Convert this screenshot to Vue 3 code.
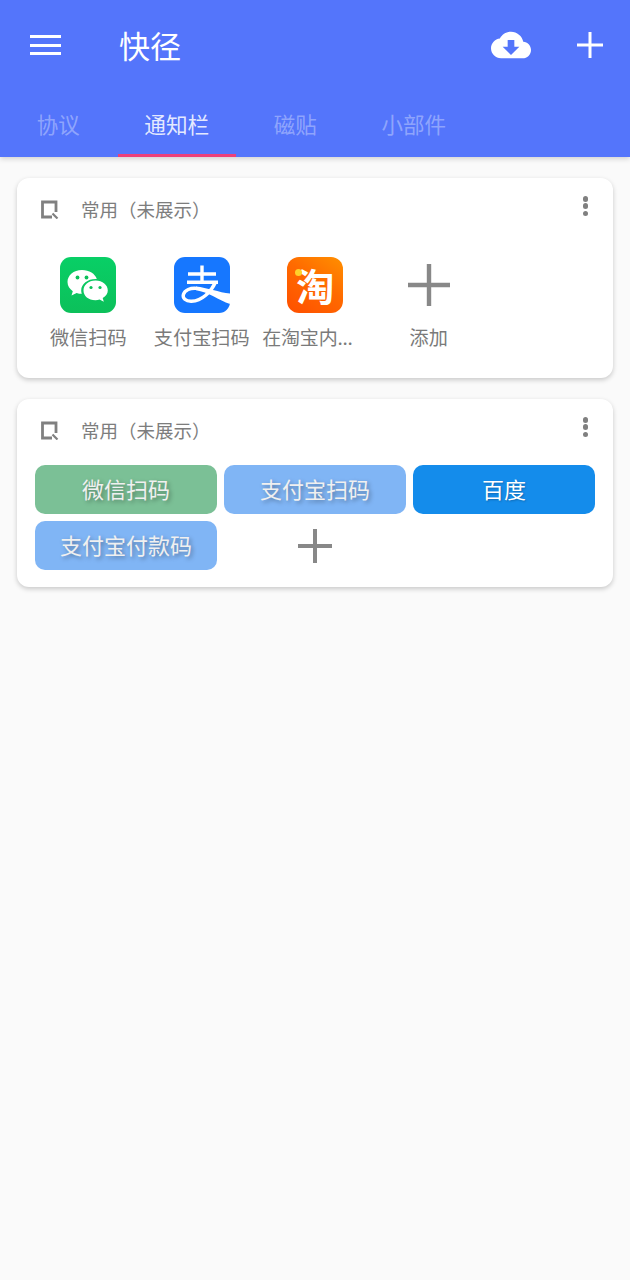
<script setup>
const tabs = [
  { label: '协议' },
  { label: '通知栏', active: true },
  { label: '磁贴' },
  { label: '小部件' }
]
const buttons = [
  { label: '微信扫码', tone: 'green' },
  { label: '支付宝扫码', tone: 'light' },
  { label: '百度', tone: 'blue' },
  { label: '支付宝付款码', tone: 'light' }
]
</script>

<template>
  <div class="page">
    <header class="appbar">
      <div class="toolbar">
        <div class="menu"><span></span><span></span><span></span></div>
        <div class="title">快径</div>
        <svg class="cloud" width="40" height="40" viewBox="0 0 24 24">
          <path fill="#fff" d="M19.35 10.04C18.67 6.59 15.64 4 12 4 9.11 4 6.6 5.64 5.35 8.04 2.34 8.36 0 10.91 0 14c0 3.31 2.69 6 6 6h13c2.76 0 5-2.24 5-5 0-2.64-2.05-4.78-4.65-4.96zM17 13l-5 5-5-5h3V9h4v4h3z"/>
        </svg>
        <svg class="add" width="28" height="28" viewBox="0 0 28 28">
          <path d="M14 1V27M1 14H27" stroke="#fff" stroke-width="3" fill="none"/>
        </svg>
      </div>
      <nav class="tabs">
        <div v-for="t in tabs" :key="t.label" class="tab" :class="{ active: t.active }">{{ t.label }}</div>
      </nav>
    </header>

    <main class="content">
      <section class="card">
        <div class="card-head">
          <svg class="note" width="20" height="20" viewBox="0 0 20 20">
            <path d="M13 18H3.5V3H17V13" fill="none" stroke="#808080" stroke-width="2.8"/>
            <path d="M13.5 14.5L18.5 19.5" fill="none" stroke="#808080" stroke-width="2.2"/>
          </svg>
          <span class="card-title">常用（未展示）</span>
          <div class="kebab"><i></i><i></i><i></i></div>
        </div>
        <div class="apps">
          <div class="app">
            <svg class="app-icon" width="56" height="56" viewBox="0 0 56 56">
              <defs>
                <linearGradient id="wx" x1="0" y1="0" x2="0" y2="1">
                  <stop offset="0" stop-color="#08cf66"/>
                  <stop offset="1" stop-color="#0cc05a"/>
                </linearGradient>
              </defs>
              <rect width="56" height="56" rx="11" fill="url(#wx)"/>
              <path fill="#fff" d="M22 13C13.5 13 7.5 18.5 7.5 25C7.5 28.8 9.6 32 12.8 34.2L11.5 38.5L16.6 35.9C18.2 36.4 20 36.8 21.8 36.8C21.4 35.6 21.2 34.6 21.2 33.4C21.2 26.9 27.6 22 35.6 22H36.8C35.2 16.8 29.2 13 22 13Z"/>
              <path fill="#fff" d="M35.5 23.5C28.4 23.5 23.5 28.1 23.5 33.4C23.5 38.8 28.4 43.2 35.5 43.2C37 43.2 38.3 42.9 39.6 42.5L43.8 44.8L42.7 41.1C45.9 39 47.8 36.4 47.8 33.4C47.8 28.1 42.6 23.5 35.5 23.5Z"/>
              <circle cx="17.5" cy="20.5" r="1.9" fill="#0cc05a"/>
              <circle cx="26.5" cy="20.5" r="1.9" fill="#0cc05a"/>
              <circle cx="31" cy="30.5" r="1.6" fill="#0cc05a"/>
              <circle cx="40" cy="30.5" r="1.6" fill="#0cc05a"/>
            </svg>
            <div class="app-label">微信扫码</div>
          </div>
          <div class="app">
            <svg class="app-icon" width="56" height="56" viewBox="0 0 56 56">
              <defs>
                <clipPath id="ali"><rect width="56" height="56" rx="11"/></clipPath>
              </defs>
              <rect width="56" height="56" rx="11" fill="#1677ff"/>
              <g clip-path="url(#ali)">
                <path fill="none" stroke="#fff" stroke-width="3.4" d="M14 17H42M28 8.5V25M13 25.3H44"/>
                <path fill="none" stroke="#fff" stroke-width="3.4" d="M41.5 25.3C37 35 28 44 17.5 44.3C11.5 44.5 8.4 41 9.4 37.5C10.6 33 16.5 30.6 23 31.4"/>
                <path fill="#fff" d="M22 29.5C33 30.5 45 35.5 56 36.5V47C45 43 34 35 22 33.2Z"/>
              </g>
            </svg>
            <div class="app-label">支付宝扫码</div>
          </div>
          <div class="app">
            <div class="taobao app-icon"><i class="tb-dot"></i><span>淘</span></div>
            <div class="app-label clipped">在淘宝内...</div>
          </div>
          <div class="app">
            <svg class="app-icon" width="56" height="56" viewBox="0 0 56 56">
              <path d="M28 7V49M7 28H49" stroke="#888" stroke-width="4.4" fill="none"/>
            </svg>
            <div class="app-label">添加</div>
          </div>
        </div>
      </section>

      <section class="card">
        <div class="card-head">
          <svg class="note" width="20" height="20" viewBox="0 0 20 20">
            <path d="M13 18H3.5V3H17V13" fill="none" stroke="#808080" stroke-width="2.8"/>
            <path d="M13.5 14.5L18.5 19.5" fill="none" stroke="#808080" stroke-width="2.2"/>
          </svg>
          <span class="card-title">常用（未展示）</span>
          <div class="kebab"><i></i><i></i><i></i></div>
        </div>
        <div class="btn-grid">
          <div v-for="b in buttons" :key="b.label" class="btn" :class="b.tone">{{ b.label }}</div>
          <div class="btn-add">
            <svg width="36" height="36" viewBox="0 0 36 36">
              <path d="M18 1V35M1 18H35" stroke="#888" stroke-width="4" fill="none"/>
            </svg>
          </div>
        </div>
      </section>
    </main>
  </div>
</template>

<style>
html, body { margin: 0; background: #fafafa; }
</style>

<style scoped>
.page {
  min-height: 1280px;
  background: #fafafa;
  font-family: "Noto Sans CJK SC", "Noto Sans", sans-serif;
}
.appbar {
  background: #5475fb;
  box-shadow: 0 2px 5px rgba(0, 0, 0, 0.16);
}
.toolbar {
  height: 92px;
  box-sizing: border-box;
  display: flex;
  align-items: center;
  padding: 0 26px 2px 30px;
}
.menu {
  width: 31px;
  height: 20px;
  display: flex;
  flex-direction: column;
  justify-content: space-between;
}
.menu span { display: block; height: 3px; background: #fff; }
.title {
  margin-left: 58px;
  flex: 1;
  font-size: 31px;
  line-height: 40px;
  color: #fff;
}
.add { margin-left: 45px; }
.tabs { display: flex; height: 65px; margin-left: -1px; }
.tab {
  width: 118.5px;
  box-sizing: border-box;
  display: flex;
  align-items: center;
  justify-content: center;
  border-bottom: 3px solid transparent;
  font-size: 21.5px;
  color: rgba(255, 255, 255, 0.36);
}
.tab.active {
  font-size: 21.7px;
  color: rgba(255, 255, 255, 0.86);
  border-bottom-color: #ec407a;
}
.content {
  padding: 21px 17px 0;
  display: flex;
  flex-direction: column;
  gap: 21px;
}
.card {
  background: #fff;
  border-radius: 12px;
  box-shadow: 0 2px 5px rgba(0, 0, 0, 0.2);
}
.card-head {
  height: 62px;
  display: flex;
  align-items: center;
  padding: 0 25px 0 22px;
}
.card-title {
  margin-left: 22px;
  flex: 1;
  font-size: 18.5px;
  color: #7d7d7d;
}
.kebab {
  height: 20px;
  margin-top: -6px;
  display: flex;
  flex-direction: column;
  justify-content: space-between;
}
.kebab i {
  display: block;
  width: 5.5px;
  height: 5.5px;
  border-radius: 50%;
  background: #808080;
}
.apps {
  display: flex;
  padding: 17px 0 28px 14.5px;
}
.app {
  width: 113.5px;
  display: flex;
  flex-direction: column;
  align-items: center;
}
.app-icon { display: block; width: 56px; height: 56px; }
.app-label {
  margin-top: 11px;
  height: 26px;
  line-height: 26px;
  font-size: 19.2px;
  color: #7a7a7a;
  white-space: nowrap;
}
.app-label.clipped { width: 104px; text-align: left; font-size: 19px; letter-spacing: -0.2px; margin-left: -2px; }
.taobao {
  position: relative;
  border-radius: 12px;
  background: linear-gradient(35deg, #ff4f00 0%, #ff6a00 55%, #ff9000 100%);
  display: flex;
  align-items: center;
  justify-content: center;
  color: #fff;
  font-size: 38px;
  font-weight: 700;
  line-height: 56px;
}
.tb-dot {
  position: absolute;
  left: 8px;
  top: 12px;
  width: 7px;
  height: 7px;
  border-radius: 50%;
  background: #ffd02a;
}
.btn-grid {
  display: grid;
  grid-template-columns: repeat(3, 182px);
  grid-auto-rows: 49px;
  gap: 7px;
  padding: 4px 18px 17px;
}
.btn {
  border-radius: 10px;
  display: flex;
  align-items: center;
  justify-content: center;
  padding-bottom: 3px;
  box-sizing: border-box;
  font-size: 22px;
  color: #f0f0f0;
  text-shadow: 2px 2px 4px rgba(0, 0, 0, 0.35);
}
.btn.green { background: #7bc096; }
.btn.light { background: #80b5f5; }
.btn.blue { background: #148ceb; text-shadow: 1px 1px 2px rgba(0, 0, 0, 0.25); color: #fff; }
.btn-add {
  display: flex;
  align-items: center;
  justify-content: center;
}
</style>
